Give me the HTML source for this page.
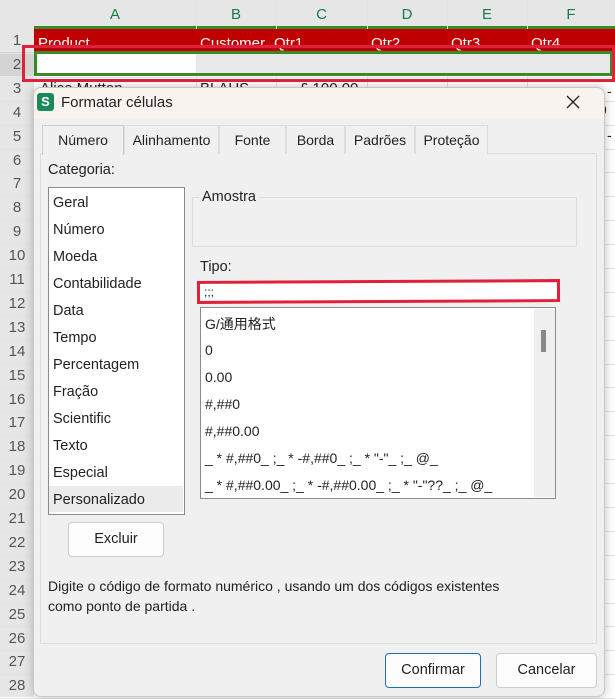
<!DOCTYPE html><html><head><style>
*{margin:0;padding:0;box-sizing:border-box}
body{width:615px;height:697px;overflow:hidden;background:#fff;font-family:"Liberation Sans","Noto Sans CJK SC",sans-serif;font-size:14px;color:#222;position:relative}
.a{position:absolute}
.rn{position:absolute;left:0;width:34px;text-align:center;color:#555;font-size:15px}
.hl{position:absolute;left:0;width:615px;height:1px;background:#e2e2e2}
.vl{position:absolute;top:0;width:1px;height:697px;background:#e2e2e2}
.ch{position:absolute;top:6px;color:#1a7a4a;font-size:15px;text-align:center}
.cat{position:absolute;left:53px;font-size:14.5px}
.it{position:absolute;left:205px;font-size:14px;white-space:pre}
.btn{position:absolute;background:#fdfdfd;border:1px solid #ccc;border-radius:4px;text-align:center;font-size:14.5px}
.tab{position:absolute;top:125px;height:29px;border:1px solid #ddd;border-bottom:none;background:#f0f0f0;text-align:center;line-height:29px;font-size:14px}
</style></head><body>
<div class="a" style="left:0;top:0;width:615px;height:28px;background:#e6e6e6"></div>
<div class="a" style="left:0;top:0;width:34px;height:697px;background:#e6e6e6"></div>
<div class="a" style="left:0;top:52px;width:34px;height:24px;background:#d4d4d4"></div>
<div class="a" style="left:34px;top:26px;width:581px;height:3px;background:#3a8a28"></div>
<div class="ch" style="left:34px;width:162px">A</div>
<div class="ch" style="left:196px;width:80px">B</div>
<div class="ch" style="left:276px;width:91px">C</div>
<div class="ch" style="left:367px;width:80px">D</div>
<div class="ch" style="left:447px;width:80px">E</div>
<div class="ch" style="left:527px;width:88px">F</div>
<div id="rows"></div>
<div class="a" style="left:34px;top:29px;width:581px;height:23px;background:#c00000;color:#fff;font-size:15px;overflow:hidden">
<span class="a" style="left:4px;top:6px">Product</span><span class="a" style="left:166px;top:6px">Customer</span><span class="a" style="left:240px;top:6px">Qtr1</span><span class="a" style="left:337px;top:6px">Qtr2</span><span class="a" style="left:417px;top:6px">Qtr3</span><span class="a" style="left:497px;top:6px">Qtr4</span></div>
<div class="a" style="left:196px;top:53px;width:419px;height:22px;background:#e8e8e8"></div>
<div class="a" style="left:34px;top:51px;width:579px;height:25px;border:3px solid #3a8a28"></div>
<div class="a" style="left:22px;top:45px;width:593px;height:37px;border:3px solid #e0213a"></div>
<div class="a" style="left:40px;top:80px;font-size:15px">Alice Mutton</div>
<div class="a" style="left:200px;top:80px;font-size:15px">BLAUS</div>
<div class="a" style="left:300px;top:80px;font-size:15px">£ 100.00</div>
<div class="a" style="left:590px;top:102px;font-size:15px">00</div>
<div class="a" style="left:607px;top:83px;font-size:14px">-</div>
<div class="a" style="left:607px;top:127px;font-size:14px">-</div>
<div class="a" style="left:33px;top:87px;width:572px;height:610px;background:#f0f0f0;border:1px solid #c8c8c8;border-radius:8px;box-shadow:0 0 10px rgba(0,0,0,.25)"></div>
<div class="a" style="left:34px;top:88px;width:570px;height:31px;background:#f9f3f0;border-radius:8px 8px 0 0"></div>
<div class="a" style="left:37px;top:93px;width:17px;height:18px;background:#1a8a5a;border-radius:3px;color:#fff;font-weight:bold;font-size:13px;text-align:center;line-height:18px">S</div>
<div class="a" style="left:61px;top:94px;font-size:15px">Formatar células</div>
<svg class="a" style="left:566px;top:95px" width="14" height="14"><path d="M1 1L13 13M13 1L1 13" stroke="#222" stroke-width="1.3"/></svg>
<div class="a" style="left:40px;top:153px;width:557px;height:491px;border:1px solid #ddd;background:#f0f0f0"></div>
<div class="tab" style="left:42px;width:82px;background:#f0f0f0;border-color:#ccc;height:30px">Número</div>
<div class="tab" style="left:124px;width:95px">Alinhamento</div>
<div class="tab" style="left:219px;width:67px">Fonte</div>
<div class="tab" style="left:286px;width:59px">Borda</div>
<div class="tab" style="left:345px;width:70px">Padrões</div>
<div class="tab" style="left:415px;width:73px">Proteção</div>
<div class="a" style="left:48px;top:162px;font-size:14.5px">Categoria:</div>
<div class="a" style="left:48px;top:187px;width:137px;height:328px;background:#fff;border:1px solid #8a8a8a"></div>
<div class="a" style="left:49px;top:486px;width:134px;height:26px;background:#ebebeb"></div>
<div class="cat" style="top:195px">Geral</div><div class="cat" style="top:222px">Número</div><div class="cat" style="top:249px">Moeda</div><div class="cat" style="top:276px">Contabilidade</div><div class="cat" style="top:303px">Data</div><div class="cat" style="top:330px">Tempo</div><div class="cat" style="top:357px">Percentagem</div><div class="cat" style="top:384px">Fração</div><div class="cat" style="top:411px">Scientific</div><div class="cat" style="top:438px">Texto</div><div class="cat" style="top:465px">Especial</div><div class="cat" style="top:492px">Personalizado</div>
<div class="a" style="left:192px;top:197px;width:385px;height:50px;border:1px solid #ddd"></div>
<div class="a" style="left:199px;top:189px;background:#f0f0f0;padding:0 3px;font-size:14.5px">Amostra</div>
<div class="a" style="left:200px;top:259px;font-size:14.5px">Tipo:</div>
<div class="a" style="left:199px;top:283px;width:358px;height:19px;background:#fff"></div>
<div class="a" style="left:197px;top:280px;width:363px;height:23px;border:3px solid #e0213a;transform:rotate(-0.3deg)"></div>
<div class="a" style="left:204px;top:285px;font-size:12px">;;;</div>
<div class="a" style="left:200px;top:307px;width:356px;height:192px;background:#fff;border:1px solid #8a8a8a"></div>
<div class="a" style="left:534px;top:309px;width:21px;height:188px;background:#efefef"></div>
<div class="a" style="left:541px;top:330px;width:5px;height:22px;background:#888"></div>
<div class="it" style="top:314px">G/通用格式</div><div class="it" style="top:342px">0</div><div class="it" style="top:369px">0.00</div><div class="it" style="top:396px">#,##0</div><div class="it" style="top:423px">#,##0.00</div><div class="it" style="top:450px">_ * #,##0_ ;_ * -#,##0_ ;_ * "-"_ ;_ @_</div><div class="it" style="top:477px">_ * #,##0.00_ ;_ * -#,##0.00_ ;_ * "-"??_ ;_ @_</div>
<div class="btn" style="left:68px;top:522px;width:96px;height:35px;line-height:33px">Excluir</div>
<div class="a" style="left:48px;top:576px;font-size:14px;line-height:20px">Digite o código de formato numérico , usando um dos códigos existentes<br>como ponto de partida .</div>
<div class="btn" style="left:385px;top:653px;width:96px;height:35px;line-height:33px;border-color:#1a6ec0">Confirmar</div>
<div class="btn" style="left:496px;top:653px;width:101px;height:35px;line-height:33px">Cancelar</div>
<script>
var h='';for(var n=1;n<=28;n++){var t=29+(n-1)*23.9;h+='<div class="rn" style="top:'+(t+3)+'px">'+n+'</div><div class="hl" style="top:'+Math.round(t+23.9)+'px"></div>';}
[196,276,367,447,527].forEach(function(x){h+='<div class="vl" style="left:'+x+'px"></div>'});
document.getElementById('rows').innerHTML=h;
</script>
</body></html>
